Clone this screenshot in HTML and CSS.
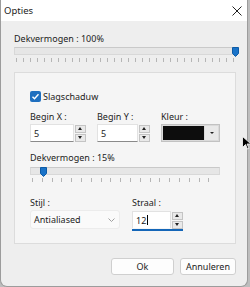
FILE: index.html
```html
<!DOCTYPE html>
<html lang="nl">
<head>
  <meta charset="UTF-8" />
  <title>Opties</title>
  <link rel="stylesheet" href="styles.css">
</head>
<body>
  <div class="window">
    <div class="titlebar">
      <span class="title">Opties</span>
      <svg class="close" width="10" height="10" viewBox="0 0 10 10">
        <path d="M0.5 0.5L9.5 9.5M9.5 0.5L0.5 9.5" stroke="#222" stroke-width="1" fill="none"/>
      </svg>
    </div>

    <div class="content">
      <div class="label">Dekvermogen : 100%</div>
      <div class="slider">
        <div class="track"></div>
        <svg class="thumb" style="left: 218px" width="7" height="10" viewBox="0 0 7 10">
          <path d="M0.5 0.5h6v6l-3 3l-3-3z" fill="#1a73c8" stroke="#0d5ba6"/>
        </svg>
        <div class="ticks ticks-wide"></div>
      </div>

      <div class="group">
        <label class="check">
          <span class="box">
            <svg width="9" height="9" viewBox="0 0 9 9"><path d="M1.5 4.8l2 2l4-4.5" stroke="#fff" stroke-width="1.4" fill="none"/></svg>
          </span>
          Slagschaduw
        </label>

        <div class="row">
          <div class="field field-x">
            <div class="label">Begin X :</div>
            <div class="spin">
              <div class="input">5</div>
              <div class="arrows">
                <span class="arrow up"></span>
                <span class="arrow down"></span>
              </div>
            </div>
          </div>
          <div class="field field-y">
            <div class="label">Begin Y :</div>
            <div class="spin">
              <div class="input">5</div>
              <div class="arrows">
                <span class="arrow up"></span>
                <span class="arrow down"></span>
              </div>
            </div>
          </div>
          <div class="field field-color">
            <div class="label">Kleur :</div>
            <div class="color">
              <span class="swatch"></span>
              <span class="drop"></span>
            </div>
          </div>
        </div>

        <div class="label label-opacity">Dekvermogen : 15%</div>
        <div class="slider slider-small">
          <div class="track"></div>
          <svg class="thumb" style="left: 10px" width="7" height="10" viewBox="0 0 7 10">
            <path d="M0.5 0.5h6v6l-3 3l-3-3z" fill="#1a73c8" stroke="#0d5ba6"/>
          </svg>
          <div class="ticks ticks-small"></div>
        </div>

        <div class="row row-bottom">
          <div class="field field-style">
            <div class="label">Stijl :</div>
            <div class="select">
              <span>Antialiased</span>
              <svg width="7" height="4" viewBox="0 0 7 4"><path d="M0.5 0.5l3 3l3-3" stroke="#a0a0a0" fill="none"/></svg>
            </div>
          </div>
          <div class="field field-radius">
            <div class="label">Straal :</div>
            <div class="spin spin-active">
              <div class="input">12<span class="caret"></span></div>
              <div class="arrows">
                <span class="arrow up"></span>
                <span class="arrow down"></span>
              </div>
            </div>
          </div>
        </div>
      </div>

      <div class="buttons">
        <button class="btn btn-ok">Ok</button>
        <button class="btn btn-cancel">Annuleren</button>
      </div>
    </div>
  </div>

  <svg class="cursor" width="9" height="14" viewBox="0 0 9 14">
    <path d="M0.5 0.5v11l3-3l2 4.5l1.5-0.7l-2-4.3h4z" fill="#000" stroke="#fff" stroke-width="0.8"/>
  </svg>
</body>
</html>
```

FILE: styles.css
```css
html, body {
  margin: 0;
  background: #bdbdbd;
}
body {
  width: 250px;
  height: 287px;
  overflow: hidden;
  position: relative;
  font-family: 'Noto Sans', sans-serif;
  font-size: 9px;
  color: #1c1c1c;
}
.window {
  box-sizing: border-box;
  width: 248px;
  height: 287px;
  background: #eeeeee;
  border: 1px solid #9c9c9c;
  border-top: none;
  border-radius: 0 0 7px 7px;
  overflow: hidden;
}
.titlebar {
  height: 21px;
  background: #fff;
  display: flex;
  align-items: center;
  justify-content: space-between;
  padding: 0 5px 0 3px;
}
.title {
  font-size: 9.5px;
}
.content {
  padding: 11px 11px 0 13px;
}
.label {
  line-height: 14px;
  white-space: nowrap;
}

/* sliders */
.slider {
  position: relative;
  margin-top: 1px;
}
.track {
  box-sizing: border-box;
  height: 8px;
  background: #e6e6e6;
  border: 1px solid #d8d8d8;
  border-top-color: #c9c9c9;
}
.thumb {
  position: absolute;
  top: 0;
  display: block;
}
.ticks {
  height: 4px;
  margin-top: 3px;
  background: repeating-linear-gradient(to right, #b5b5b5 0 1px, transparent 1px 7px);
  margin-left: 2px;
  margin-right: 2px;
}
.ticks-small {
  background: repeating-linear-gradient(to right, #b5b5b5 0 1px, transparent 1px 9.8px);
}

/* group box */
.group {
  margin-top: 10px;
  background: #f5f5f5;
  border: 1px solid #dcdcdc;
  padding: 17px 15px 12px 15px;
}
.check {
  display: flex;
  align-items: center;
  height: 12px;
}
.box {
  width: 11px;
  height: 11px;
  border-radius: 2px;
  background: #1f6fbf;
  display: flex;
  align-items: center;
  justify-content: center;
  margin-right: 2px;
}
.box svg {
  display: block;
}
.row {
  display: flex;
  gap: 11px;
  margin-top: 8px;
}
.field-x { width: 56px; }
.field-y { width: 53px; }
.field-color { width: 59px; }

.spin {
  display: flex;
  height: 18px;
}
.input {
  box-sizing: border-box;
  flex: 1;
  min-width: 0;
  height: 18px;
  display: flex;
  align-items: center;
  border: 1px solid #e2e2e2;
  border-bottom-color: #8a8a8a;
  background: #fff;
  padding: 0 3px;
}
.caret {
  width: 1px;
  height: 10px;
  background: #000;
  margin-left: 1px;
}
.arrows {
  width: 11px;
  display: flex;
  flex-direction: column;
  justify-content: center;
  gap: 1px;
  padding-left: 1px;
}
.arrow {
  box-sizing: border-box;
  height: 8px;
  background: #e9e9e9;
  border: 1px solid #c4c4c4;
  position: relative;
}
.arrow::after {
  content: "";
  position: absolute;
  left: 2px;
  top: 1px;
  border-left: 2.5px solid transparent;
  border-right: 2.5px solid transparent;
}
.arrow.up::after {
  border-bottom: 3px solid #222;
}
.arrow.down::after {
  border-top: 3px solid #222;
}

.color {
  box-sizing: border-box;
  height: 18px;
  display: flex;
  align-items: center;
  gap: 1px;
  padding: 1px;
  background: #dadada;
  border: 1px solid #c2c2c2;
}
.swatch {
  width: 41px;
  height: 14px;
  background: #0d0d0d;
}
.drop {
  flex: 1;
  height: 14px;
  background: #e9e9e9;
  position: relative;
}
.drop::after {
  content: "";
  position: absolute;
  left: 5px;
  top: 6px;
  border-left: 2px solid transparent;
  border-right: 2px solid transparent;
  border-top: 2px solid #222;
}

.label-opacity {
  margin-top: 9px;
}
.slider-small {
  margin-top: 2px;
  width: 190px;
}

.row-bottom {
  gap: 12px;
  margin-top: 14px;
}
.field-style { width: 90px; }
.field-radius { width: 51px; }
.select {
  box-sizing: border-box;
  height: 19px;
  display: flex;
  align-items: center;
  justify-content: space-between;
  padding: 0 4px 0 3px;
  background: #fafafa;
  border: 1px solid #ececec;
  border-radius: 3px;
}
.select svg {
  display: block;
}
.spin-active {
  height: 18px;
  border-bottom: 2px solid #1466b8;
  margin-top: 1px;
}
.spin-active .input {
  height: 17px;
  border-bottom: none;
}

.buttons {
  display: flex;
  justify-content: flex-end;
  gap: 6px;
  margin-top: 14px;
}
.btn {
  box-sizing: border-box;
  height: 17px;
  padding: 0;
  background: #fdfdfd;
  border: 1px solid #cfcfcf;
  border-radius: 3px;
  font-family: inherit;
  font-size: 9px;
  color: #1c1c1c;
}
.btn-ok { width: 63px; }
.btn-cancel { width: 56px; }

.cursor {
  position: absolute;
  left: 242px;
  top: 136px;
}
```
